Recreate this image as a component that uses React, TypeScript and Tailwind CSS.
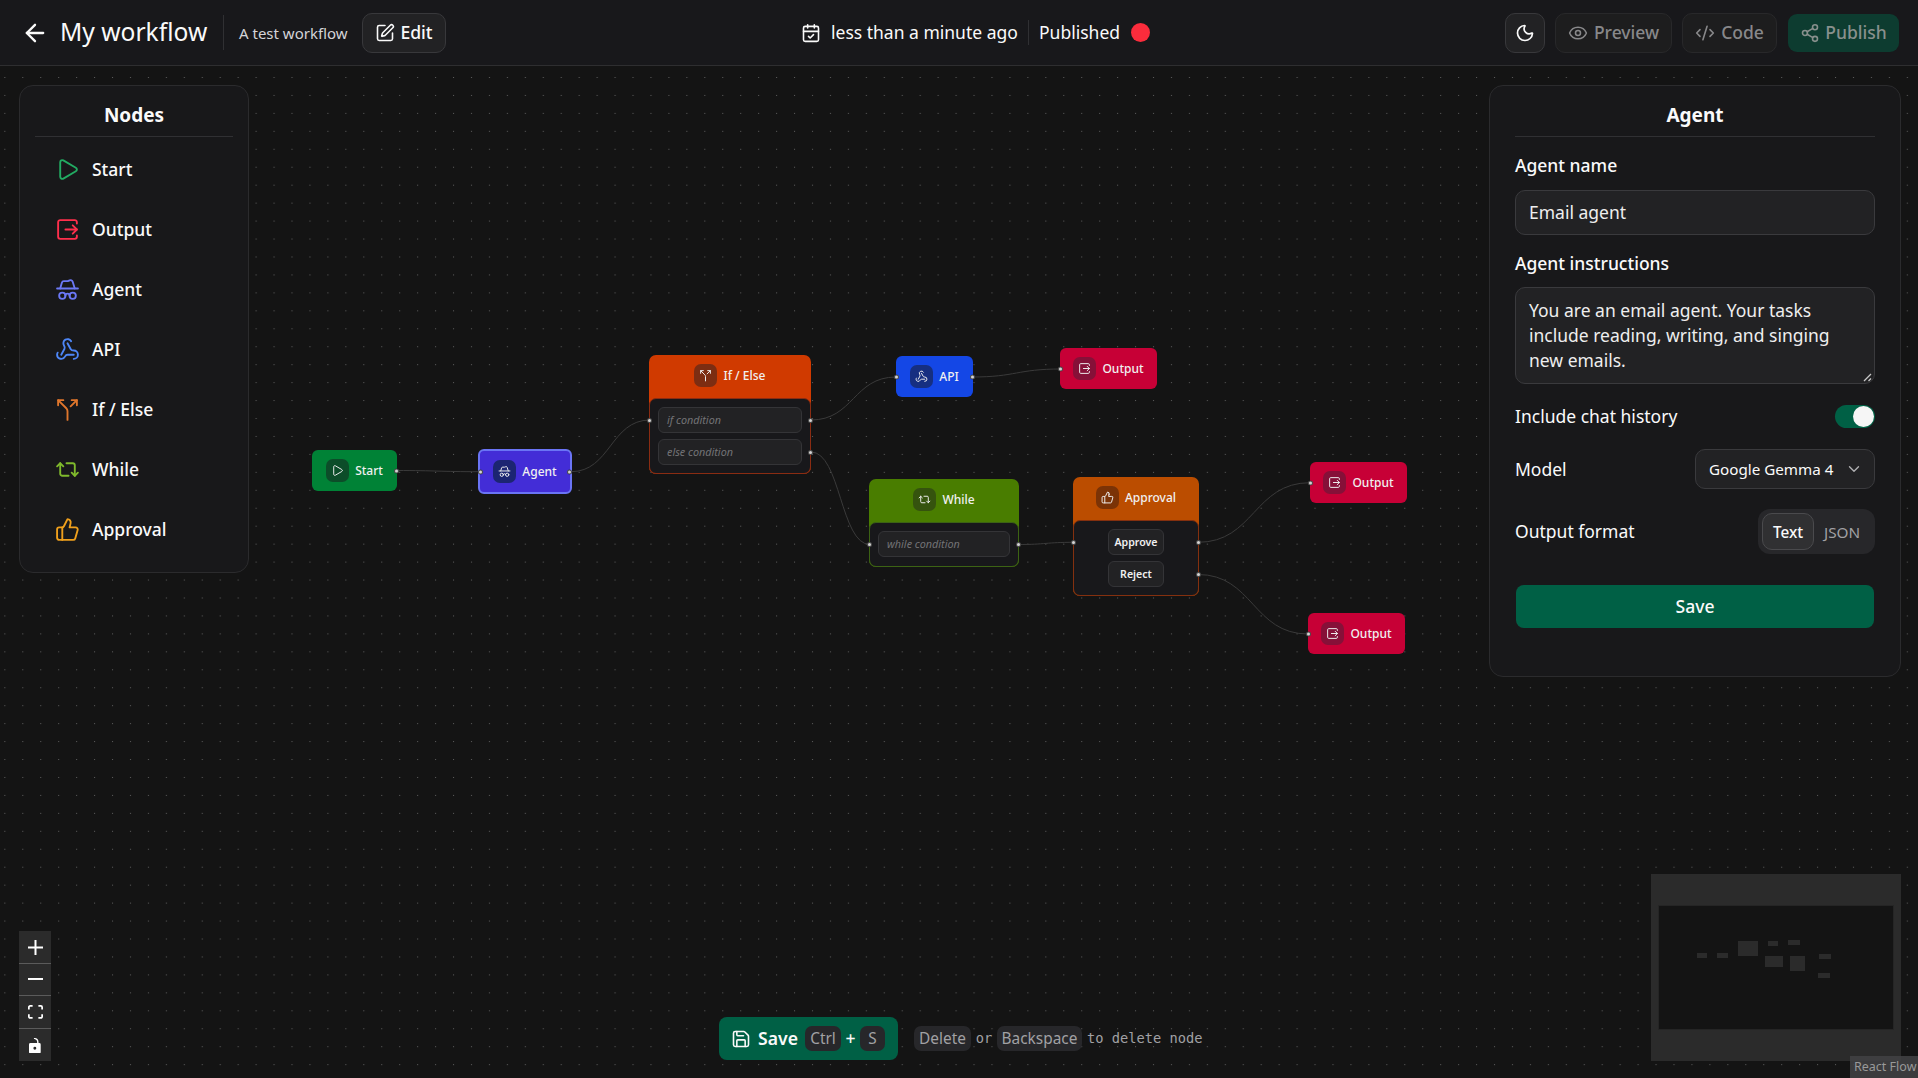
import React from "react";
import {
  ArrowLeft, SquarePen, CalendarCheck, Moon, Eye, Share2, Play, HatGlasses, Webhook,
  Split, Repeat2, ThumbsUp, Save, ChevronDown,
} from "lucide-react";

type IconProps = { className?: string; strokeWidth?: number };
type IconType = React.ComponentType<IconProps>;

function ExitIcon({ className, strokeWidth = 2 }: IconProps) {
  return (
    <svg viewBox="0 0 24 24" fill="none" stroke="currentColor" strokeWidth={strokeWidth} strokeLinecap="round" strokeLinejoin="round" className={className}>
      <path d="M10 12h11" />
      <path d="m17 16 4-4-4-4" />
      <path d="M21 6.344V5a2 2 0 0 0-2-2H5a2 2 0 0 0-2 2v14a2 2 0 0 0 2 2h14a2 2 0 0 0 2-2v-1.344" />
    </svg>
  );
}

function CodeIcon({ className, strokeWidth = 2 }: IconProps) {
  return (
    <svg viewBox="0 0 24 24" fill="none" stroke="currentColor" strokeWidth={strokeWidth} strokeLinecap="round" strokeLinejoin="round" className={className}>
      <path d="m18 16 4-4-4-4" />
      <path d="m6 8-4 4 4 4" />
      <path d="m14.5 4-5 16" />
    </svg>
  );
}

const palette: { label: string; icon: IconType; color: string }[] = [
  { label: "Start", icon: Play, color: "text-[#22ab62]" },
  { label: "Output", icon: ExitIcon, color: "text-[#ff2f4c]" },
  { label: "Agent", icon: HatGlasses, color: "text-[#6b78f5]" },
  { label: "API", icon: Webhook, color: "text-[#4d86f7]" },
  { label: "If / Else", icon: Split, color: "text-[#e0762c]" },
  { label: "While", icon: Repeat2, color: "text-[#7fb92c]" },
  { label: "Approval", icon: ThumbsUp, color: "text-[#f0a01c]" },
];

function Handle({ className }: { className: string }) {
  return <span className={`absolute size-[5px] rounded-full border border-[#141414]/70 bg-[#d4d4d4] ${className}`} />;
}

function NodeLabel({ icon: Icon, label, tint = "bg-zinc-900/50" }: { icon: IconType; label: string; tint?: string }) {
  return (
    <>
      <span className={`flex size-[23px] items-center justify-center rounded-[7px] ${tint}`}>
        <Icon className="size-[13px]" strokeWidth={1.8} />
      </span>
      <span className="pt-px text-[12px] font-medium">{label}</span>
    </>
  );
}

function SimpleNode({ icon, label, className, tint, left, right }: { icon: IconType; label: string; className: string; tint?: string; left?: boolean; right?: boolean }) {
  return (
    <div className={`absolute flex items-center justify-center gap-[6px] rounded-[6px] text-[#f0f0f0] ${className}`}>
      <NodeLabel icon={icon} label={label} tint={tint} />
      {left && <Handle className="-left-[2px] top-1/2 -translate-y-1/2" />}
      {right && <Handle className="-right-[2px] top-1/2 -translate-y-1/2" />}
    </div>
  );
}

function CardNode({ icon, label, className, border, tint, children }: { icon: IconType; label: string; className: string; border: string; tint?: string; children: React.ReactNode }) {
  return (
    <div className={`absolute flex flex-col rounded-[7px] text-[#f0f0f0] ${className}`}>
      <div className="flex h-[41px] shrink-0 items-center justify-center gap-[6px]">
        <NodeLabel icon={icon} label={label} tint={tint} />
      </div>
      <div className={`mt-[2px] flex flex-1 flex-col gap-[6px] rounded-[7px] border bg-zinc-900 pt-[8px] ${border}`}>{children}</div>
    </div>
  );
}

function Condition({ text }: { text: string }) {
  return (
    <div className="mx-[8px] flex h-[26px] items-center rounded-[6px] border border-[#343437] bg-[#222224] px-[8px] pt-px text-[10.8px] italic text-[#737376]">
      {text}
    </div>
  );
}

function Branch({ text }: { text: string }) {
  return (
    <div className="flex h-[26px] w-[56px] items-center justify-center self-center rounded-[6px] border border-[#343437] bg-[#222224] pt-px text-[10.6px] font-semibold">
      {text}
    </div>
  );
}

const edges: [number, number, number, number][] = [
  [396, 470.5, 480, 471.7],
  [571, 471.7, 650, 420],
  [811, 420, 896, 377],
  [972, 377, 1061, 369],
  [811, 452, 870, 544.5],
  [1018, 544.5, 1074, 542.3],
  [1198, 542.3, 1310, 482.7],
  [1198, 574.5, 1308, 634],
];

function FlowCanvas() {
  return (
    <div className="absolute inset-0">
      <svg className="absolute inset-0 size-full">
        <defs>
          <pattern id="dots" x="4.3" y="77" width="17.948" height="17.948" patternUnits="userSpaceOnUse">
            <circle cx="0.6" cy="0.5" r="0.5" fill="#777" />
          </pattern>
        </defs>
        <rect width="100%" height="100%" fill="url(#dots)" />
        {edges.map(([x1, y1, x2, y2], i) => (
          <path key={i} d={`M${x1} ${y1}C${(x1 + x2) / 2} ${y1} ${(x1 + x2) / 2} ${y2} ${x2} ${y2}`} fill="none" stroke="#3a3a3a" strokeWidth="1" />
        ))}
      </svg>

      <SimpleNode icon={Play} label="Start" className="left-[312px] top-[450px] h-[41px] w-[85px] bg-green-700" right />
      <SimpleNode icon={HatGlasses} label="Agent" className="left-[478px] top-[449px] h-[45px] w-[94px] border-2 border-[#6a74f5] bg-indigo-700" tint="bg-[#1c2572]" left right />
      <SimpleNode icon={Webhook} label="API" className="left-[896px] top-[356px] h-[41px] w-[77px] bg-blue-700" left right />
      <SimpleNode icon={ExitIcon} label="Output" className="left-[1060px] top-[348px] h-[41px] w-[97px] bg-rose-700" tint="bg-[#861038]" left />
      <SimpleNode icon={ExitIcon} label="Output" className="left-[1310px] top-[462px] h-[41px] w-[97px] bg-rose-700" tint="bg-[#861038]" left />
      <SimpleNode icon={ExitIcon} label="Output" className="left-[1308px] top-[613px] h-[41px] w-[97px] bg-rose-700" tint="bg-[#861038]" left />

      <CardNode icon={Split} label="If / Else" className="left-[649px] top-[355px] h-[119px] w-[162px] bg-[#d03a00]" border="border-[#8a2c12]" tint="bg-[#7c2d12]">
        <Condition text="if condition" />
        <Condition text="else condition" />
        <Handle className="-left-[2px] top-[62.5px]" />
        <Handle className="-right-[2px] top-[62.5px]" />
        <Handle className="-right-[2px] top-[94.5px]" />
      </CardNode>
      <CardNode icon={Repeat2} label="While" className="left-[869px] top-[479px] h-[88px] w-[150px] bg-lime-700" border="border-[#3c6314]" tint="bg-[#35530e]">
        <Condition text="while condition" />
        <Handle className="-left-[2px] top-[63px]" />
        <Handle className="-right-[2px] top-[63px]" />
      </CardNode>
      <CardNode icon={ThumbsUp} label="Approval" className="left-[1073px] top-[477px] h-[119px] w-[126px] bg-amber-700" border="border-[#84300f]" tint="bg-[#7b3306]">
        <Branch text="Approve" />
        <Branch text="Reject" />
        <Handle className="-left-[2px] top-[63px]" />
        <Handle className="-right-[2px] top-[63px]" />
        <Handle className="-right-[2px] top-[95px]" />
      </CardNode>
    </div>
  );
}

function Header() {
  return (
    <header className="relative flex h-[66px] items-center justify-between border-b border-[#2e2e30] bg-zinc-900">
      <div className="flex items-center">
        <ArrowLeft className="ml-[21px] size-[28px]" strokeWidth={2} />
        <span className="ml-[11px] w-[148px] whitespace-nowrap text-[24.6px]">My workflow</span>
        <span className="ml-[15px] h-[35px] w-px bg-[#303033]" />
        <span className="ml-[15px] w-[109px] whitespace-nowrap pt-px text-[15px] text-[#d4d4d8]">A test workflow</span>
        <button className="ml-[14px] flex h-[40px] w-[84px] items-center justify-center gap-[5px] rounded-[10px] border border-[#38383b] bg-[#222224] text-[17.6px] font-medium">
          <SquarePen className="size-[20px]" strokeWidth={1.9} />
          Edit
        </button>
      </div>
      <div className="absolute left-[801px] flex h-full items-center text-[17.5px]">
        <CalendarCheck className="size-[20px]" strokeWidth={1.9} />
        <span className="ml-[10px] w-[187px] whitespace-nowrap">less than a minute ago</span>
        <span className="ml-[10px] h-[25px] w-px bg-[#303033]" />
        <span className="ml-[10px] w-[81px]">Published</span>
        <span className="ml-[11px] size-[19px] rounded-full bg-[#fb2c3c]" />
      </div>
      <div className="mr-[19px] flex items-center text-[17.5px] font-medium">
        <button className="flex size-[40px] items-center justify-center rounded-[10px] border border-[#38383b] bg-[#222224]">
          <Moon className="size-[20px]" />
        </button>
        <button className="ml-[10px] flex h-[40px] w-[117px] items-center justify-center gap-[6px] rounded-[10px] border border-[#28282a] bg-[#1d1d1e] text-[#88888a]">
          <Eye className="size-[20px]" strokeWidth={1.9} />
          Preview
        </button>
        <button className="ml-[10px] flex h-[40px] w-[95px] items-center justify-center gap-[6px] rounded-[10px] border border-[#28282a] bg-[#1d1d1e] text-[#88888a]">
          <CodeIcon className="size-[20px]" strokeWidth={1.9} />
          Code
        </button>
        <button className="ml-[11px] flex h-[38px] w-[111px] items-center justify-center gap-[5px] rounded-[9px] bg-[#0d3c30] text-[#88908d]">
          <Share2 className="size-[20px]" strokeWidth={1.9} />
          Publish
        </button>
      </div>
    </header>
  );
}

function NodesPanel() {
  return (
    <aside className="h-[488px] w-[230px] rounded-[14px] border border-[#2b2b2d] bg-[#18181a] px-[15px]">
      <h2 className="flex h-[51px] items-center justify-center border-b border-[#303033] pt-[8px] text-[19px] font-bold">
        Nodes
      </h2>
      <ul className="mt-[2px]">
        {palette.map(({ label, icon: Icon, color }) => (
          <li key={label} className="flex h-[60px] items-center pl-[20px]">
            <Icon className={`size-[25px] ${color}`} strokeWidth={1.8} />
            <span className="ml-[12px] text-[17.5px] font-medium">{label}</span>
          </li>
        ))}
      </ul>
    </aside>
  );
}

function AgentPanel() {
  return (
    <aside className="h-[592px] w-[412px] rounded-[14px] border border-[#2b2b2d] bg-[#18181a] px-[25px] text-[17.5px]">
      <h2 className="flex h-[51px] items-center justify-center border-b border-[#303033] pt-[8px] text-[19px] font-bold">
        Agent
      </h2>
      <label className="mt-[15px] block leading-[27px] font-medium">Agent name</label>
      <div className="mt-[11px] flex h-[45px] items-center rounded-[10px] border border-[#3a3a3d] bg-[#222224] px-[13px] text-[#eeeeee]">Email agent</div>
      <label className="mt-[15px] block leading-[27px] font-medium">Agent instructions</label>
      <div className="relative mt-[10px] h-[97px] rounded-[10px] border border-[#3a3a3d] bg-[#222224] px-[13px] pt-[10px] leading-[25px] text-[#eeeeee]">
        You are an email agent. Your tasks include reading, writing, and singing new emails.
        <svg viewBox="0 0 9 9" className="absolute bottom-px right-[2px] size-[9px]" stroke="#c8c8c8" strokeWidth="1.3">
          <path d="M1 8 8 1M5.500 8 8 5.500" />
        </svg>
      </div>
      <div className="mt-[19px] flex h-[27px] items-center justify-between">
        <span>Include chat history</span>
        <span className="flex h-[23px] w-[40px] items-center justify-end rounded-full bg-emerald-800 pr-px">
          <span className="size-[21px] rounded-full bg-[#f6f6f6]" />
        </span>
      </div>
      <div className="mt-[19px] flex h-[40px] items-center justify-between">
        <span>Model</span>
        <span className="flex h-[40px] w-[180px] items-center justify-between rounded-[10px] border border-[#3a3a3d] bg-[#222224] pl-[13px] pr-[11px] text-[15.2px]">
          <span className="pt-px">Google Gemma 4</span>
          <ChevronDown className="size-[18px] text-[#b0b0b2]" strokeWidth={1.8} />
        </span>
      </div>
      <div className="mt-[20px] flex h-[45px] items-center justify-between">
        <span>Output format</span>
        <span className="flex h-[45px] w-[117px] items-center rounded-[12px] bg-[#27272a] pl-[4px] text-[15.3px]">
          <span className="flex h-[37px] w-[52px] items-center justify-center rounded-[10px] border border-[#4a4a4d] bg-[#303032] pt-px font-medium">Text</span>
          <span className="ml-[10px] pt-px text-[#a1a1a4]">JSON</span>
        </span>
      </div>
      <button className="mx-px mt-[31px] flex h-[43px] w-[358px] items-center justify-center rounded-[8px] bg-emerald-800 font-medium">Save</button>
    </aside>
  );
}

function Controls() {
  return (
    <div className="flex w-[32px] flex-col divide-y divide-[#5b5b5b] bg-[#2b2b2b] text-white">
      <span className="flex h-[33px] items-center justify-center">
        <svg viewBox="0 0 32 32" className="size-[15px]" fill="currentColor">
          <path d="M32 18.133H18.133V32h-4.266V18.133H0v-4.266h13.867V0h4.266v13.867H32z" />
        </svg>
      </span>
      <span className="flex h-[32px] items-center justify-center">
        <svg viewBox="0 0 32 5" className="w-[15px]" fill="currentColor">
          <path d="M0 0h32v4.200H0z" />
        </svg>
      </span>
      <span className="flex h-[33px] items-center justify-center">
        <svg viewBox="0 0 32 30" className="w-[15px]" fill="currentColor">
          <path d="M3.692 4.630c0-.530.400-.938.939-.938h5.215V0H4.708C2.130 0 0 2.054 0 4.630v5.216h3.692V4.631zM27.354 0h-5.200v3.692h5.170c.530 0 .984.400.984.939v5.215H32V4.631A4.624 4.624 0 0027.354 0zm.954 24.830c0 .532-.400.940-.939.940h-5.215v3.768h5.215c2.577 0 4.631-2.130 4.631-4.707v-5.139h-3.692v5.139zm-23.677.940c-.531 0-.939-.400-.939-.940v-5.138H0v5.139c0 2.577 2.130 4.707 4.708 4.707h5.138V25.770H4.631z" />
        </svg>
      </span>
      <span className="flex h-[32px] items-center justify-center pt-px">
        <svg viewBox="0 0 25 32" className="w-[12px]" fill="currentColor">
          <path d="M21.333 10.667H19.810V7.619C19.810 3.429 16.380 0 12.190 0c-4.114 1.828-1.370 2.133.305 2.438 1.676.305 4.420 2.590 4.420 5.181v3.048H3.047A3.056 3.056 0 000 13.714v15.238A3.056 3.056 0 003.048 32h18.285a3.056 3.056 0 003.048-3.048V13.714a3.056 3.056 0 00-3.048-3.047zM12.190 24.533a3.056 3.056 0 01-3.047-3.047 3.056 3.056 0 013.047-3.048 3.056 3.056 0 013.048 3.048 3.056 3.056 0 01-3.048 3.047z" />
        </svg>
      </span>
    </div>
  );
}

const miniNodes: [number, number, number, number][] = [
  [46, 79, 10, 5], [66, 79, 11, 5], [87, 67, 20, 15], [117, 67, 10, 5], [137, 66, 12, 5],
  [114, 82, 18, 11], [139, 82, 15, 15], [168, 80, 12, 5], [167, 99, 12, 5],
];

function MiniMap() {
  return (
    <svg viewBox="0 0 250 187" className="h-[187px] w-[250px]">
      <rect width="250" height="187" fill="#2b2b2b" />
      <rect x="7.500" y="31.500" width="235" height="124" fill="#141414" stroke="#252525" />
      {miniNodes.map(([x, y, w, h], i) => (
        <rect key={i} x={x} y={y} width={w} height={h} fill="#2b2b2b" />
      ))}
    </svg>
  );
}

function Kbd({ children, className }: { children: string; className: string }) {
  return (
    <kbd className={`flex h-[25px] items-center justify-center rounded-[7px] bg-[#27272a] pt-px font-['Noto_Sans',sans-serif] text-[15.4px] font-normal text-[#a1a1a4] ${className}`}>
      {children}
    </kbd>
  );
}

function ActionBar() {
  return (
    <div className="flex items-center">
      <button className="flex h-[43px] w-[179px] items-center rounded-[8px] bg-emerald-800 pl-[12px] text-[17.6px] font-semibold">
        <Save className="size-[20px]" strokeWidth={1.9} />
        <span className="ml-[7px] w-[40px]">Save</span>
        <Kbd className="ml-[7px] w-[36px]">Ctrl</Kbd>
        <span className="w-[19px] text-center font-medium">+</span>
        <Kbd className="w-[25px]">S</Kbd>
      </button>
      <div className="ml-[16px] flex items-center font-['DejaVu_Sans_Mono',monospace] text-[13.700px] text-[#a1a1a4]">
        <Kbd className="w-[57px]">Delete</Kbd>
        <span className="w-[26px] text-center">or</span>
        <Kbd className="w-[85px]">Backspace</Kbd>
        <span className="ml-[5px] w-[116px] whitespace-nowrap">to delete node</span>
      </div>
    </div>
  );
}

export default function App() {
  return (
    <div className="relative h-[1078px] w-[1918px] overflow-hidden bg-[#141414] font-['Noto_Sans',sans-serif] text-[#fafafa]">
      <FlowCanvas />
      <div className="relative flex h-full flex-col">
        <Header />
        <main className="flex flex-1 items-start justify-between pl-[19px] pr-[17px] pt-[19px]">
          <NodesPanel />
          <AgentPanel />
        </main>
        <footer className="flex items-end justify-between pb-[17px] pl-[19px] pr-[17px]">
          <Controls />
          <div className="ml-[220px] flex pb-px">
            <ActionBar />
          </div>
          <MiniMap />
        </footer>
      </div>
      <span className="absolute bottom-0 right-0 flex h-[22px] w-[68px] items-center whitespace-nowrap bg-[#424244]/85 pl-[4px] text-[12.500px] text-[#999]">React Flow</span>
    </div>
  );
}
